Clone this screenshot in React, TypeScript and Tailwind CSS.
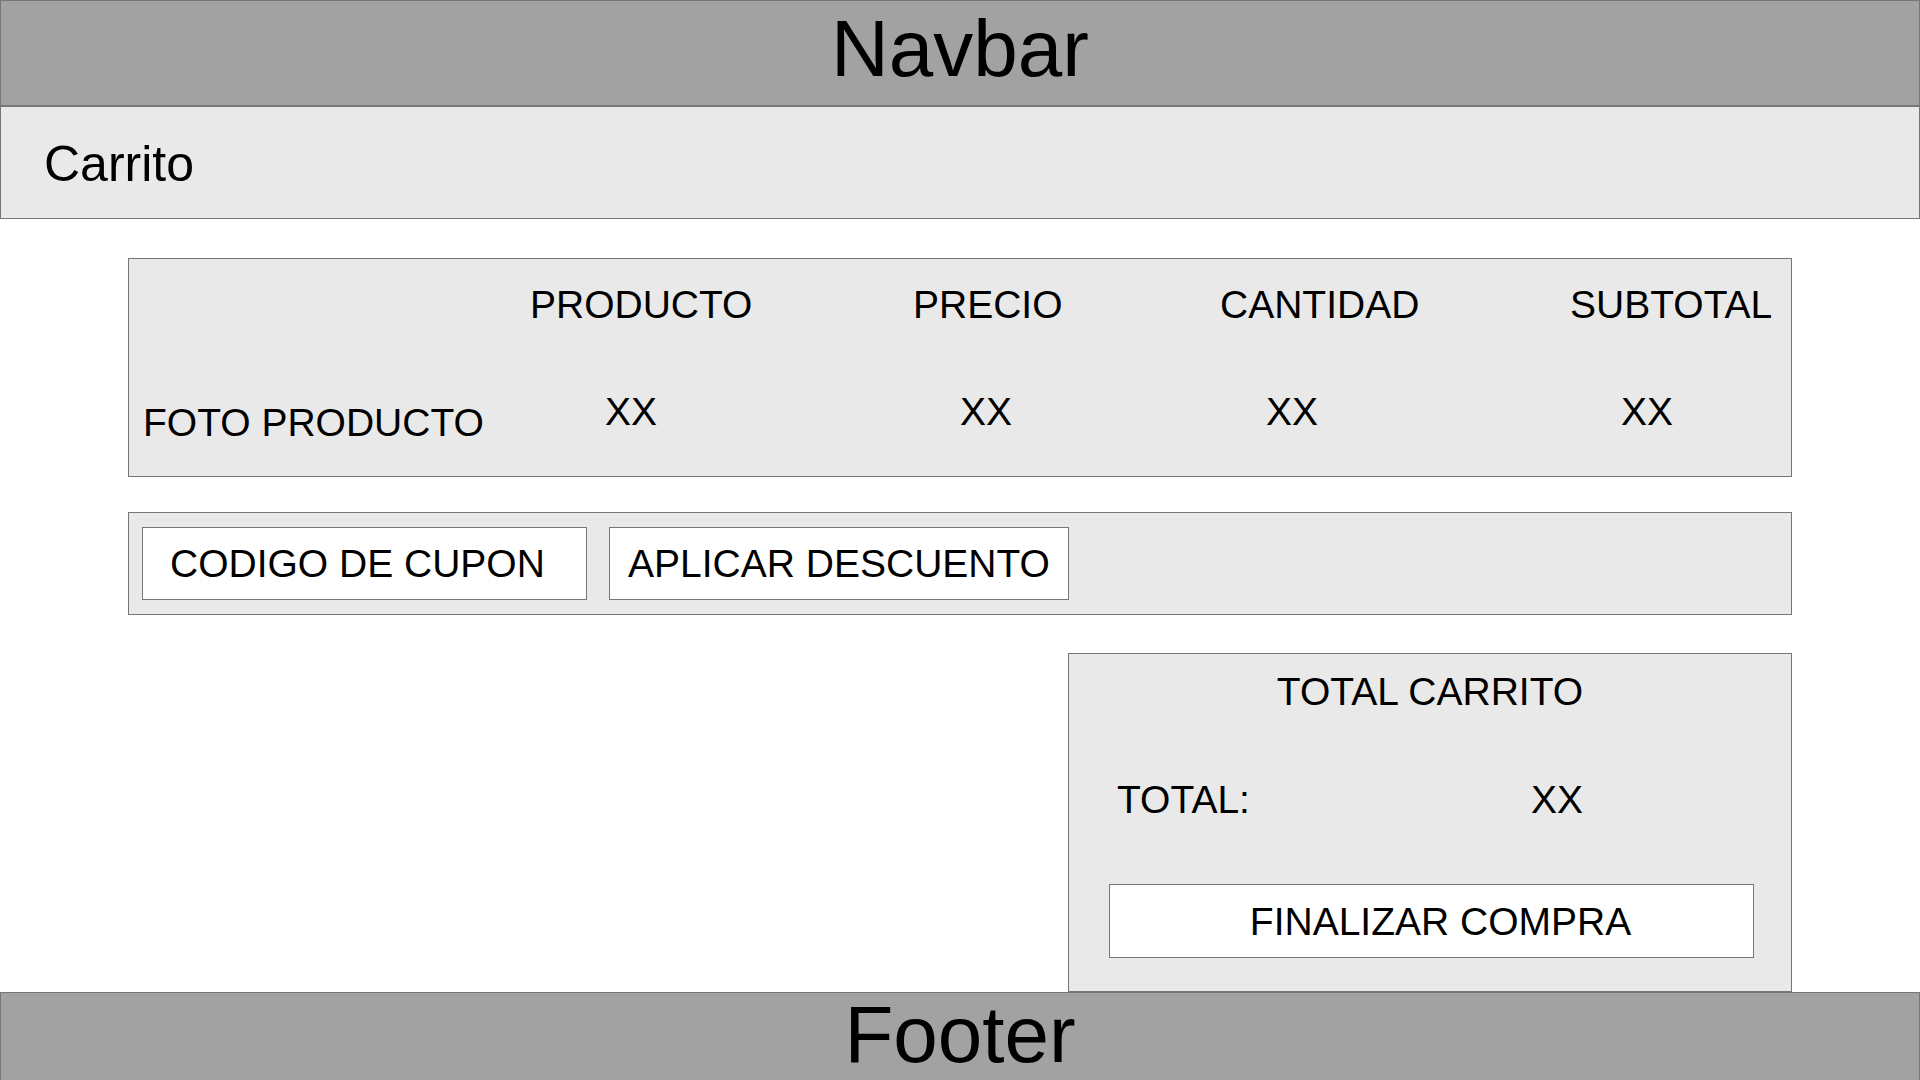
import React from "react";

const headers = ["PRODUCTO", "PRECIO", "CANTIDAD", "SUBTOTAL"];

export default function App() {
  return (
    <div className="min-h-screen bg-white text-black font-['Liberation_Sans',Arial,sans-serif]">
      <header className="h-[106px] border border-[#767676] bg-[#a2a2a2] flex justify-center pt-[8px]">
        <span className="text-[80px] leading-none">Navbar</span>
      </header>

      <div className="h-[113px] border border-[#767676] bg-[#e9e9e9] pl-[43px] pt-[32px]">
        <h1 className="text-[50px] leading-none">Carrito</h1>
      </div>

      <main className="mx-[128px] pt-[39px] flex flex-col text-[39px] leading-none">
        {/* tabla de productos */}
        <section className="h-[219px] border border-[#767676] bg-[#e9e9e9]">
          <div className="grid grid-cols-[401px_383px_307px_350px_1fr] pt-[26px]">
            <div />
            {headers.map((h) => (
              <div key={h}>{h}</div>
            ))}
          </div>
          <div className="grid grid-cols-[476px_355px_306px_355px_1fr] items-start">
            <div className="pl-[14px] mt-[79px]">FOTO PRODUCTO</div>
            <div className="mt-[68px]">XX</div>
            <div className="mt-[68px]">XX</div>
            <div className="mt-[68px]">XX</div>
            <div className="mt-[68px]">XX</div>
          </div>
        </section>

        {/* cupon */}
        <section className="mt-[35px] h-[103px] border border-[#767676] bg-[#e9e9e9] flex items-center gap-[22px] px-[13px]">
          <div className="w-[445px] h-[73px] border border-[#767676] bg-white flex items-center pl-[27px]">
            CODIGO DE CUPON
          </div>
          <button className="w-[460px] h-[73px] border border-[#767676] bg-white flex items-center justify-center">
            APLICAR DESCUENTO
          </button>
        </section>

        {/* total */}
        <section className="mt-[38px] self-end w-[724px] h-[339px] border border-[#767676] bg-[#e9e9e9] flex flex-col pt-[18px]">
          <div className="text-center">TOTAL CARRITO</div>
          <div className="grid grid-cols-[414px_1fr] pl-[48px] mt-[69px]">
            <span>TOTAL:</span>
            <span>XX</span>
          </div>
          <button className="mt-[65px] ml-[40px] mr-[37px] h-[74px] border border-[#767676] bg-white flex items-center justify-center pl-[18px]">
            FINALIZAR COMPRA
          </button>
        </section>
      </main>

      <footer className="h-[100px] border border-[#767676] bg-[#a2a2a2] flex justify-center pt-[2px]">
        <span className="text-[80px] leading-none">Footer</span>
      </footer>
    </div>
  );
}
